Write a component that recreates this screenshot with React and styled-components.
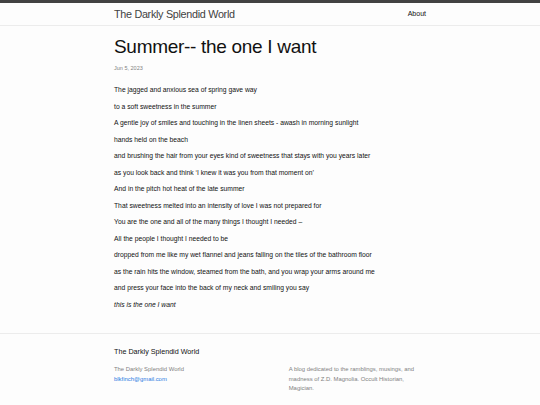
import React from 'react'
import styled, { createGlobalStyle } from 'styled-components'

const GlobalStyle = createGlobalStyle`
  html, body {
    margin: 0;
    padding: 0;
    background: #fdfdfd;
  }
  body {
    font-family: "Liberation Sans", Arial, Helvetica, sans-serif;
    color: #111;
    font-size: 6.75px;
    line-height: 1.5;
  }
`

const Wrapper = styled.div`
  width: 312px;
  margin: 0 auto;
`

const Header = styled.header`
  border-top: 3px solid #424242;
  border-bottom: 1px solid #ececec;
`

const HeaderRow = styled(Wrapper)`
  display: flex;
  justify-content: space-between;
  align-items: center;
  height: 22px;
`

const SiteTitle = styled.a`
  font-size: 10.8px;
  letter-spacing: -0.3px;
  color: #424242;
  text-decoration: none;
`

const NavLink = styled.a`
  font-size: 7px;
  color: #111;
  text-decoration: none;
`

const Main = styled.main`
  padding: 7px 0 20px;
`

const PostTitle = styled.h1`
  margin: 0;
  font-size: 19px;
  font-weight: 400;
  letter-spacing: -0.3px;
  line-height: 28px;
  color: #111;
`

const PostDate = styled.p`
  margin: 3px 0 0;
  font-size: 5.5px;
  color: #828282;
`

const PostBody = styled.div`
  margin-top: 10px;
`

const Line = styled.p`
  margin: 0;
  line-height: 16.5px;
  font-style: ${p => (p.$italic ? 'italic' : 'normal')};
`

const Footer = styled.footer`
  border-top: 1px solid #ececec;
  padding: 13px 0 10px;
`

const FooterHeading = styled.h2`
  margin: 0 0 7px;
  font-size: 7.2px;
  font-weight: 400;
  color: #111;
`

const FooterCols = styled.div`
  display: flex;
  font-size: 5.9px;
  line-height: 9.5px;
  color: #828282;
`

const FooterCol = styled.div`
  width: ${p => p.$w};
  padding-right: 8px;
  box-sizing: border-box;
`

const Mail = styled.a`
  color: #2a7ae2;
  text-decoration: none;
`

const lines = [
  'The jagged and anxious sea of spring gave way',
  'to a soft sweetness in the summer',
  'A gentle joy of smiles and touching in the linen sheets - awash in morning sunlight',
  'hands held on the beach',
  'and brushing the hair from your eyes kind of sweetness that stays with you years later',
  'as you look back and think \u2018I knew it was you from that moment on\u2019',
  'And in the pitch hot heat of the late summer',
  'That sweetness melted into an intensity of love I was not prepared for',
  'You are the one and all of the many things I thought I needed \u2013',
  'All the people I thought I needed to be',
  'dropped from me like my wet flannel and jeans falling on the tiles of the bathroom floor',
  'as the rain hits the window, steamed from the bath, and you wrap your arms around me',
  'and press your face into the back of my neck and smiling you say',
]

export default function App() {
  return (
    <>
      <GlobalStyle />
      <Header>
        <HeaderRow>
          <SiteTitle href="#">The Darkly Splendid World</SiteTitle>
          <NavLink href="#">About</NavLink>
        </HeaderRow>
      </Header>
      <Main>
        <Wrapper>
          <PostTitle>Summer-- the one I want</PostTitle>
          <PostDate>Jun 5, 2023</PostDate>
          <PostBody>
            {lines.map((l, i) => (
              <Line key={i}>{l}</Line>
            ))}
            <Line $italic>this is the one I want</Line>
          </PostBody>
        </Wrapper>
      </Main>
      <Footer>
        <Wrapper>
          <FooterHeading>The Darkly Splendid World</FooterHeading>
          <FooterCols>
            <FooterCol $w="35%">
              <div>The Darkly Splendid World</div>
              <Mail href="#">blkfinch@gmail.com</Mail>
            </FooterCol>
            <FooterCol $w="21%" />
            <FooterCol $w="44%">
              A blog dedicated to the ramblings, musings, and madness of Z.D. Magnolia. Occult Historian, Magician.
            </FooterCol>
          </FooterCols>
        </Wrapper>
      </Footer>
    </>
  )
}
